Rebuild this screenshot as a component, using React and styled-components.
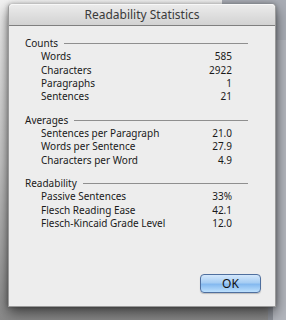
import React from "react";
import styled, { createGlobalStyle } from "styled-components";

const Global = createGlobalStyle`
  html, body { margin: 0; padding: 0; }
  body { width: 286px; height: 320px; overflow: hidden; }
`;

const Desktop = styled.div`
  width: 286px;
  height: 320px;
  box-sizing: border-box;
  padding: 4px 0 0 8px;
  background:
    linear-gradient(to right, transparent 0, transparent 222px, #a9adb5 222px, #a9adb5 286px) top / 100% 40px no-repeat,
    linear-gradient(to right, transparent 0, transparent 268px, #8d9199 268px, #8d9199 273px, #b3b6bd 273px) 0 0 / 100% 100% no-repeat,
    linear-gradient(to bottom, #f2f2f2 0%, #c8c8c8 50%, #8a8a8a 100%);
  font-family: "Noto Sans", "Liberation Sans", sans-serif;
`;

const Window = styled.div`
  width: 268px;
  height: 303px;
  box-sizing: border-box;
  display: flex;
  flex-direction: column;
  background: #ededed;
  border: 1px solid #9a9a9a;
  border-top: none;
  border-radius: 4px 4px 0 0;
  box-shadow: 0 6px 14px rgba(0, 0, 0, 0.55), 0 0 4px rgba(0, 0, 0, 0.3);
  overflow: hidden;
`;

const TitleBar = styled.div`
  height: 21px;
  flex: none;
  display: flex;
  align-items: center;
  justify-content: center;
  background: linear-gradient(to bottom, #ececec, #d2d2d2);
  border-bottom: 1px solid #7f7f7f;
  color: #3a3a3a;
  font-size: 12px;
  border-radius: 4px 4px 0 0;
  box-shadow: inset 0 1px 0 #f8f8f8;
`;

const Body = styled.div`
  flex: 1;
  display: flex;
  flex-direction: column;
  padding: 11px 43px 0 16px;
`;

const Section = styled.section`
  margin-bottom: 10px;
`;

const Header = styled.div`
  display: flex;
  align-items: center;
  gap: 6px;
  font-size: 10px;
  line-height: 13.33px;
  color: #1a1a1a;
  margin-right: -16px;
  &::after {
    content: "";
    flex: 1;
    height: 1px;
    background: #8f8f8f;
  }
`;

const Row = styled.div`
  display: flex;
  justify-content: space-between;
  padding-left: 16px;
  font-size: 10px;
  line-height: 13.33px;
  color: #1a1a1a;
`;

const Footer = styled.div`
  margin-top: auto;
  display: flex;
  justify-content: flex-end;
  padding: 0 14px 13px 0;
`;

const OkButton = styled.button`
  width: 61px;
  height: 19px;
  border: 1px solid #4f6f9e;
  border-radius: 4px;
  background: linear-gradient(to bottom, #d4e8fc 0%, #a6cdf3 45%, #84b9ef 55%, #bde0fd 100%);
  font-family: "Noto Sans", "Liberation Sans", sans-serif;
  font-size: 12px;
  color: #111;
  padding: 0;
  box-shadow: 0 1px 1px rgba(0, 0, 0, 0.2);
`;

const sections = [
  {
    title: "Counts",
    rows: [
      ["Words", "585"],
      ["Characters", "2922"],
      ["Paragraphs", "1"],
      ["Sentences", "21"],
    ],
  },
  {
    title: "Averages",
    rows: [
      ["Sentences per Paragraph", "21.0"],
      ["Words per Sentence", "27.9"],
      ["Characters per Word", "4.9"],
    ],
  },
  {
    title: "Readability",
    rows: [
      ["Passive Sentences", "33%"],
      ["Flesch Reading Ease", "42.1"],
      ["Flesch-Kincaid Grade Level", "12.0"],
    ],
  },
];

export default function App() {
  return (
    <>
      <Global />
      <Desktop>
        <Window>
          <TitleBar>Readability Statistics</TitleBar>
          <Body>
            {sections.map((s) => (
              <Section key={s.title}>
                <Header>{s.title}</Header>
                {s.rows.map(([k, v]) => (
                  <Row key={k}>
                    <span>{k}</span>
                    <span>{v}</span>
                  </Row>
                ))}
              </Section>
            ))}
          </Body>
          <Footer>
            <OkButton>OK</OkButton>
          </Footer>
        </Window>
      </Desktop>
    </>
  );
}
